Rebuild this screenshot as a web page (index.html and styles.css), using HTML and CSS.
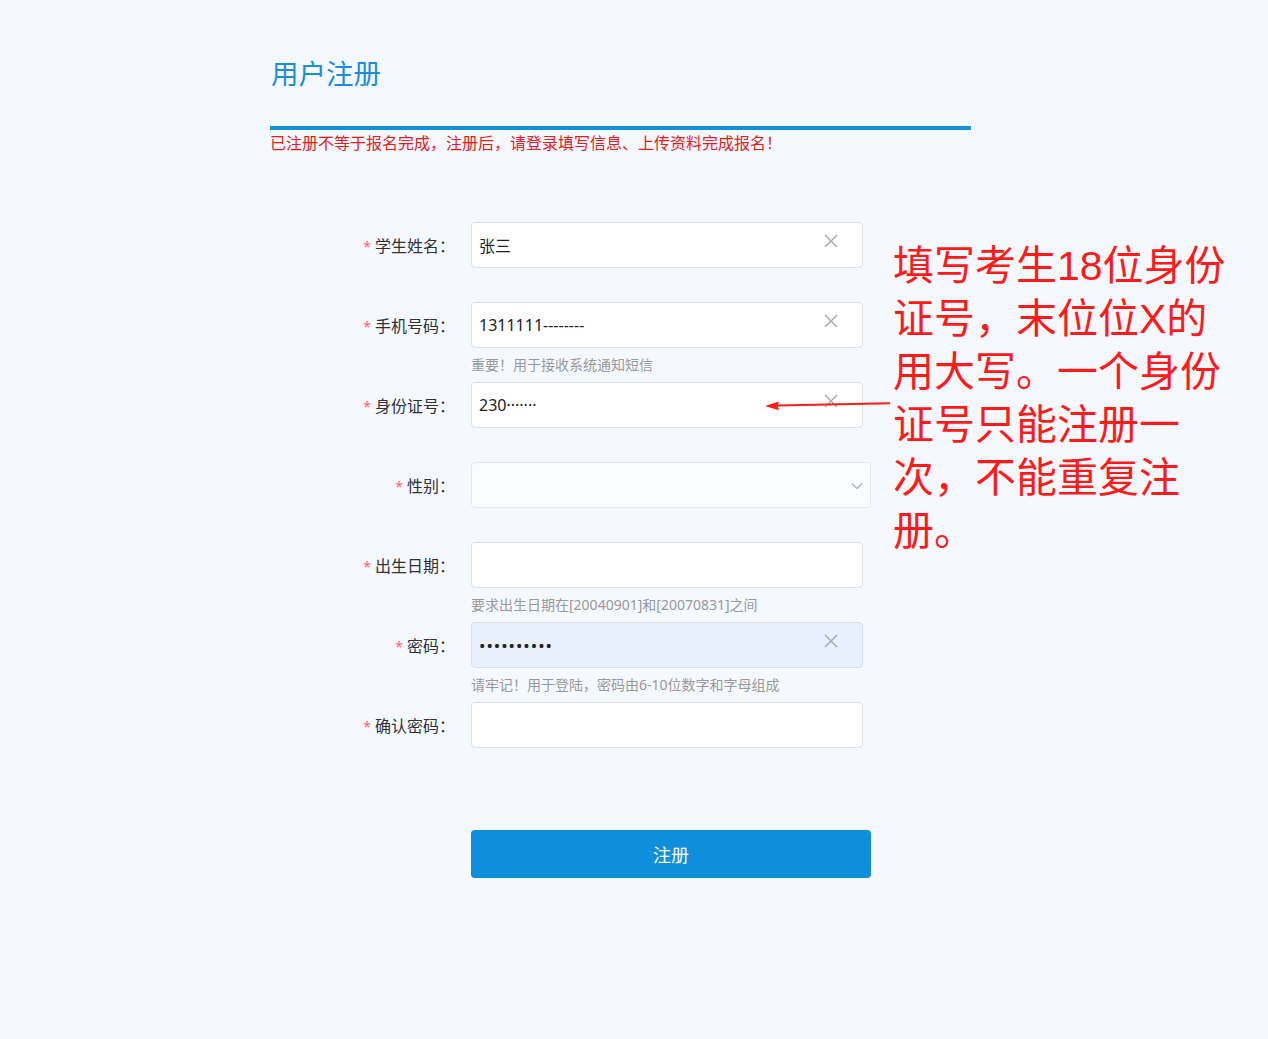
FILE: index.html
```html
<!DOCTYPE html>
<html lang="zh-CN">
<head>
<meta charset="utf-8">
<title>用户注册</title>
<link rel="stylesheet" href="styles.css">
</head>
<body>
<div class="page">
  <div class="panel">
    <h1 class="title">用户注册</h1>
    <div class="bar"></div>
    <p class="notice">已注册不等于报名完成，注册后，请登录填写信息、上传资料完成报名！</p>

    <form class="form">
      <div class="item">
        <div class="row">
          <label class="label"><span class="req">*</span>学生姓名：</label>
          <div class="field">
            <input class="input" type="text" value="张三">
            <svg class="clear" viewBox="0 0 14 14"><path d="M1 1L13 13M13 1L1 13"/></svg>
          </div>
        </div>
      </div>

      <div class="item">
        <div class="row">
          <label class="label"><span class="req">*</span>手机号码：</label>
          <div class="field">
            <input class="input input-phone" type="text" value="1311111--------">
            <svg class="clear" viewBox="0 0 14 14"><path d="M1 1L13 13M13 1L1 13"/></svg>
          </div>
        </div>
        <div class="hint">重要！用于接收系统通知短信</div>
      </div>

      <div class="item">
        <div class="row">
          <label class="label"><span class="req">*</span>身份证号：</label>
          <div class="field">
            <input class="input" type="text" value="230·······">
            <svg class="clear" viewBox="0 0 14 14"><path d="M1 1L13 13M13 1L1 13"/></svg>
          </div>
        </div>
      </div>

      <div class="item">
        <div class="row">
          <label class="label"><span class="req">*</span>性别：</label>
          <div class="field field-select">
            <div class="select"></div>
            <svg class="chevron" viewBox="0 0 12 8"><path d="M1 1.5L6 6.5L11 1.5"/></svg>
          </div>
        </div>
      </div>

      <div class="item">
        <div class="row">
          <label class="label"><span class="req">*</span>出生日期：</label>
          <div class="field">
            <input class="input" type="text" value="">
          </div>
        </div>
        <div class="hint">要求出生日期在[20040901]和[20070831]之间</div>
      </div>

      <div class="item">
        <div class="row">
          <label class="label"><span class="req">*</span>密码：</label>
          <div class="field">
            <input class="input input-filled" type="password" value="abc1234567">
            <svg class="clear" viewBox="0 0 14 14"><path d="M1 1L13 13M13 1L1 13"/></svg>
          </div>
        </div>
        <div class="hint">请牢记！用于登陆，密码由6-10位数字和字母组成</div>
      </div>

      <div class="item">
        <div class="row">
          <label class="label"><span class="req">*</span>确认密码：</label>
          <div class="field">
            <input class="input" type="password" value="">
          </div>
        </div>
      </div>

      <div class="actions">
        <button class="submit" type="button">注册</button>
      </div>
    </form>
  </div>

  <div class="note">
    <div class="note-line">填写考生18位身份</div>
    <div class="note-line">证号，末位位X的</div>
    <div class="note-line">用大写。一个身份</div>
    <div class="note-line">证号只能注册一</div>
    <div class="note-line">次，不能重复注</div>
    <div class="note-line">册。</div>
  </div>
  <svg class="arrow" viewBox="0 0 130 14"><path class="arrow-line" d="M12 7.5L125 5.2"/><path class="arrow-head" d="M0 8L14 3.5L12.5 8L14 12.2Z"/></svg>
</div>
</body>
</html>
```

FILE: styles.css
```css
* { box-sizing: border-box; }

html, body {
  margin: 0;
  padding: 0;
  background: #f5f8fe;
}

body {
  font-family: "Noto Sans", "Noto Sans CJK SC", sans-serif;
  color: #333;
  min-height: 1039px;
}

.page {
  position: relative;
  width: 1268px;
  min-height: 1039px;
}

.panel {
  margin-left: 270px;
  width: 701px;
  padding-top: 55px;
}

.title {
  margin: 0;
  padding-left: 1px;
  font-size: 27.5px;
  line-height: 38px;
  font-weight: 400;
  color: #1b8ddf;
}

.bar {
  margin-top: 33px;
  height: 4px;
  background: #1190dd;
}

.notice {
  margin: 0;
  font-size: 16px;
  line-height: 26px;
  color: #f01818;
}

.form {
  margin-top: 66px;
  width: 601px;
}

.item {
  height: 80px;
}

.row {
  display: flex;
  align-items: center;
  height: 46px;
}

.label {
  flex: none;
  width: 201px;
  padding-right: 16px;
  text-align: right;
  font-size: 16px;
  color: #303133;
  white-space: nowrap;
}

.req {
  color: #f56c6c;
  margin-right: 4px;
  font-size: 14px;
}

.field {
  position: relative;
  flex: none;
  width: 392px;
  height: 46px;
}

.field-select {
  width: 400px;
}

.input {
  display: block;
  width: 100%;
  height: 46px;
  padding: 0 40px 0 7px;
  border: 1px solid #dcdfe6;
  border-radius: 4px;
  background: #fff;
  font-family: "Noto Sans", "Noto Sans CJK SC", sans-serif;
  font-size: 16px;
  color: #222;
  outline: none;
}

.input-phone {
  word-spacing: 0;
}

.input-filled {
  background: #e8f0fe;
  letter-spacing: 1px;
  font-size: 17px;
}

.select {
  width: 100%;
  height: 46px;
  border: 1px solid #e4e7ed;
  border-radius: 4px;
  background: #fafcff;
}

.clear {
  position: absolute;
  right: 25px;
  top: 12px;
  width: 14px;
  height: 14px;
  fill: none;
  stroke: #a8abb2;
  stroke-width: 1.6;
}

.chevron {
  position: absolute;
  right: 8px;
  top: 20px;
  width: 12px;
  height: 8px;
  fill: none;
  stroke: #a8abb2;
  stroke-width: 1.2;
}

.hint {
  margin-left: 201px;
  height: 34px;
  line-height: 34px;
  font-size: 14px;
  color: #999;
}

.actions {
  margin-top: 48px;
  padding-left: 201px;
}

.submit {
  display: block;
  width: 400px;
  height: 48px;
  border: none;
  border-radius: 4px;
  background: #0f8edb;
  color: #fff;
  font-family: "Noto Sans", "Noto Sans CJK SC", sans-serif;
  font-size: 18px;
  cursor: pointer;
}

.note {
  position: absolute;
  left: 893px;
  top: 240px;
  font-family: "Liberation Sans", "Noto Sans CJK SC", sans-serif;
  font-size: 41px;
  color: #ff1a1a;
  white-space: nowrap;
}

.note-line {
  height: 53px;
  line-height: 53px;
}

.arrow {
  position: absolute;
  left: 765px;
  top: 398px;
  width: 130px;
  height: 14px;
  overflow: visible;
}

.arrow-line {
  fill: none;
  stroke: #ff1a1a;
  stroke-width: 2;
}

.arrow-head {
  fill: #ff1a1a;
}
```
